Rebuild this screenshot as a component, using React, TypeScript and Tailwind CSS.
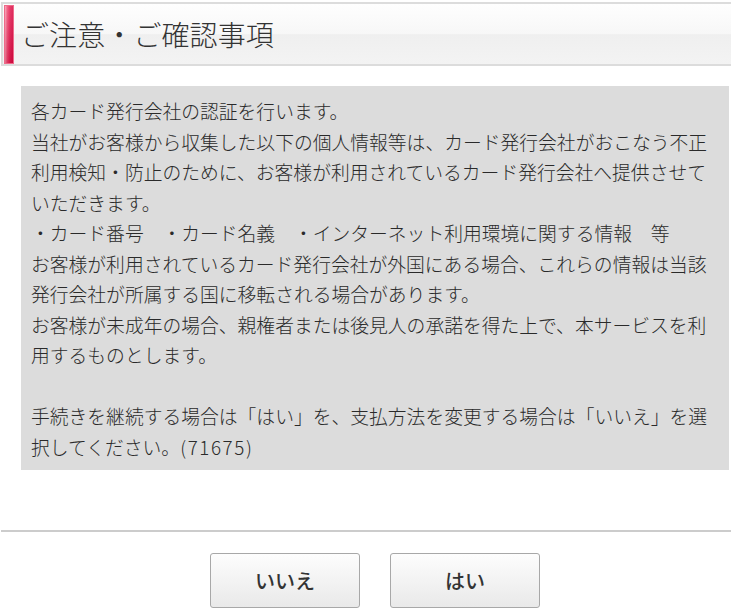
import React from "react";

const lines: React.ReactNode[] = [
  "各カード発行会社の認証を行います。",
  "当社がお客様から収集した以下の個人情報等は、カード発行会社がおこなう不正",
  "利用検知・防止のために、お客様が利用されているカード発行会社へ提供させて",
  "いただきます。",
  "・カード番号　・カード名義　・インターネット利用環境に関する情報　等",
  "お客様が利用されているカード発行会社が外国にある場合、これらの情報は当該",
  "発行会社が所属する国に移転される場合があります。",
  "お客様が未成年の場合、親権者または後見人の承諾を得た上で、本サービスを利",
  "用するものとします。",
  "",
  "手続きを継続する場合は「はい」を、支払方法を変更する場合は「いいえ」を選",
  <>
    択してください。<span className="tracking-[1.6px]">(71675)</span>
  </>,
];

export default function App() {
  return (
    <div
      className="w-[731px] h-[615px] overflow-hidden bg-white text-[#333]"
      style={{ fontFamily: '"Noto Sans CJK JP", "Noto Sans", sans-serif' }}
    >
      <div className="w-[748px] ml-[1px]">
        <div className="mt-[2px] h-[64px] border-2 border-[#dcdcdc] bg-[linear-gradient(to_bottom,#fefefe_0%,#f7f7f7_50%,#efefef_51%,#f3f3f3_100%)] flex items-center">
          <div className="ml-[1px] h-[59px] w-[10px] self-start mt-[1px] border border-[#f06a8a] bg-[linear-gradient(to_right,#f7a0b5_0%,#f04a72_30%,#e41e52_60%,#d80a44_100%)] flex">
            <div className="w-full h-full bg-[linear-gradient(to_bottom,rgba(255,255,255,0.15),rgba(160,0,40,0.25))]" />
          </div>
          <h1 className="ml-[7px] text-[28px] leading-none font-light text-[#333] tracking-[0.1px]">
            ご注意・ご確認事項
          </h1>
        </div>

        <div className="mt-[20px] mx-[20px] bg-[#dcdcdc] px-[10px] pt-[10px] pb-[8px] text-[18.8px] leading-[30.5px] font-light text-[#2a2a2a]">
          {lines.map((l, i) => (
            <div key={i} className="whitespace-nowrap h-[30.5px]">
              {l}
            </div>
          ))}
        </div>

        <div className="mt-[60px] h-[2px] bg-[#cccccc]" />

        <div className="mt-[21px] flex justify-center gap-[30px]">
          <button className="w-[150px] h-[55px] rounded-[3px] border border-[#a8a8a8] bg-[linear-gradient(to_bottom,#fdfdfd,#e9e9e9)] text-[20px] font-medium text-[#333]">
            いいえ
          </button>
          <button className="w-[150px] h-[55px] rounded-[3px] border border-[#a8a8a8] bg-[linear-gradient(to_bottom,#fdfdfd,#e9e9e9)] text-[20px] font-medium text-[#333]">
            はい
          </button>
        </div>
      </div>
    </div>
  );
}
